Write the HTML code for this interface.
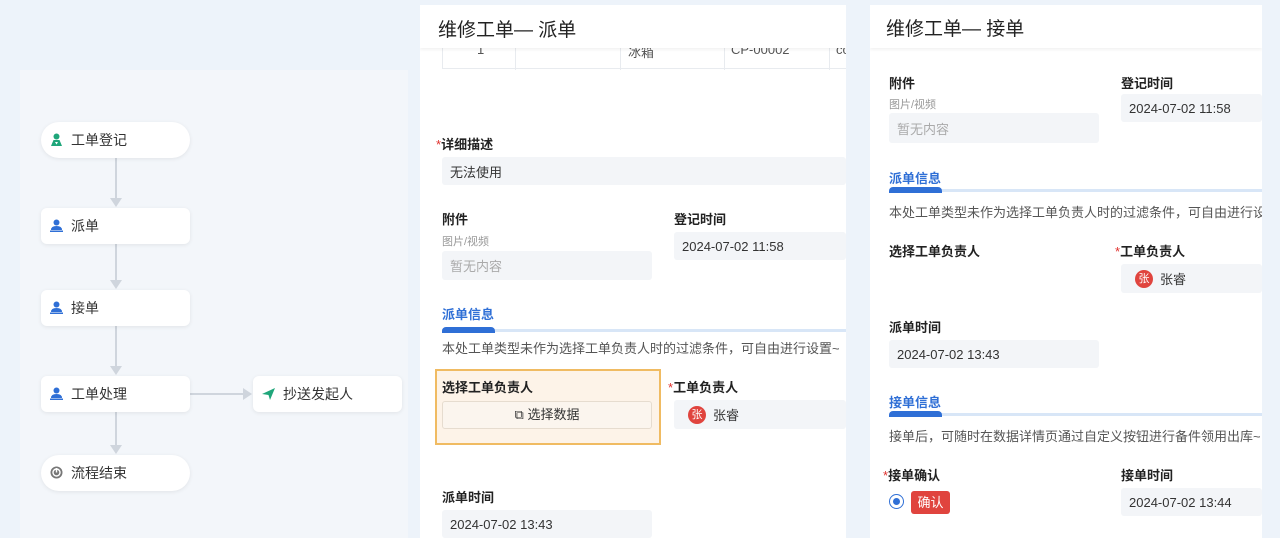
<!DOCTYPE html>
<html><head><meta charset="utf-8"><style>
*{margin:0;padding:0;box-sizing:border-box}
body{width:1280px;height:538px;overflow:hidden;background:#edf3fa;font-family:"Liberation Sans","Noto Sans CJK SC",sans-serif;color:#222;position:relative}
.a{position:absolute;white-space:nowrap}
.node{position:absolute;background:#fff;border-radius:6px;box-shadow:0 1px 4px rgba(0,0,0,.08);height:36px;width:149px;font-size:14px;color:#333;display:flex;align-items:center;padding-left:30px}
.node .ic{position:absolute;left:9px;top:11px}
.pill{border-radius:18px}
.vl{position:absolute;left:115px;width:2px;background:#cfd5dd}
.ah{position:absolute;width:0;height:0;border-left:6px solid transparent;border-right:6px solid transparent;border-top:9px solid #cfd5dd}
.lb{font-size:13px;font-weight:bold;color:#222}
.st{color:#e0302d;font-weight:normal}
.box{position:absolute;background:#f3f5f8;border-radius:3px;font-size:13px;color:#333;display:flex;align-items:center;padding-left:8px}
.sec{font-size:13px;font-weight:bold;color:#2f6fd6}
.bar{position:absolute;height:3px;background:#d8e6f7}
.barb{position:absolute;height:6px;background:#2f6fd6;border-radius:4px 4px 0 0}
.desc{font-size:13px;color:#555}
.gray{font-size:11px;color:#999}
.av{display:inline-block;width:18px;height:18px;border-radius:50%;background:#e0443e;color:#fff;font-size:11px;text-align:center;line-height:18px;margin-right:7px}
</style></head><body>
<div class="a" style="left:20px;top:70px;width:388px;height:468px;background:#f3f6fa"></div>
<div class="vl" style="top:158px;height:42px"></div><div class="ah" style="left:110px;top:198px"></div>
<div class="vl" style="top:244px;height:38px"></div><div class="ah" style="left:110px;top:280px"></div>
<div class="vl" style="top:326px;height:42px"></div><div class="ah" style="left:110px;top:366px"></div>
<div class="vl" style="top:412px;height:35px"></div><div class="ah" style="left:110px;top:445px"></div>
<div class="a" style="left:190px;top:393px;width:55px;height:2px;background:#cfd5dd"></div>
<div class="a" style="left:243px;top:388px;border-top:6px solid transparent;border-bottom:6px solid transparent;border-left:9px solid #cfd5dd"></div>

<div class="node pill" style="left:41px;top:122px"><svg class="ic" width="13" height="13" viewBox="0 0 13 13"><circle cx="6.5" cy="3.5" r="3" fill="#1fa67a"/><path d="M1 13 L3.5 7 H9.5 L12 13Z" fill="#1fa67a"/><path d="M5 9 H8 L6.5 11.5Z" fill="#fff"/></svg>工单登记</div>
<div class="node" style="left:41px;top:208px"><svg class="ic" width="13" height="13" viewBox="0 0 13 13"><circle cx="6.5" cy="3.5" r="3" fill="#2f6fd6"/><path d="M1 11 Q1 7 6.5 7 Q12 7 12 11Z" fill="#2f6fd6"/><rect x="0" y="11.5" width="13" height="1.5" fill="#2f6fd6"/></svg>派单</div>
<div class="node" style="left:41px;top:290px"><svg class="ic" width="13" height="13" viewBox="0 0 13 13"><circle cx="6.5" cy="3.5" r="3" fill="#2f6fd6"/><path d="M1 11 Q1 7 6.5 7 Q12 7 12 11Z" fill="#2f6fd6"/><rect x="0" y="11.5" width="13" height="1.5" fill="#2f6fd6"/></svg>接单</div>
<div class="node" style="left:41px;top:376px"><svg class="ic" width="13" height="13" viewBox="0 0 13 13"><circle cx="6.5" cy="3.5" r="3" fill="#2f6fd6"/><path d="M1 11 Q1 7 6.5 7 Q12 7 12 11Z" fill="#2f6fd6"/><rect x="0" y="11.5" width="13" height="1.5" fill="#2f6fd6"/></svg>工单处理</div>
<div class="node" style="left:253px;top:376px"><svg class="ic" width="13" height="13" viewBox="0 0 13 13"><path d="M0 7 L13 1 L8 13 L6.5 8Z" fill="#1fa67a"/></svg>抄送发起人</div>
<div class="node pill" style="left:41px;top:455px"><svg class="ic" width="13" height="13" viewBox="0 0 13 13"><circle cx="6.5" cy="6.5" r="6" fill="#777"/><circle cx="6.5" cy="6.5" r="3.5" fill="none" stroke="#fff" stroke-width="1.4"/><rect x="5.8" y="2" width="1.4" height="4.5" fill="#fff"/></svg>流程结束</div>

<div class="a" style="left:420px;top:5px;width:426px;height:533px;background:#fff;overflow:hidden">
  <div class="a" style="left:22px;top:20px;width:410px;height:44px;border:1px solid #e8ebef;font-size:13px;color:#555">
    <div class="a" style="left:72px;top:0;width:1px;height:44px;background:#e8ebef"></div>
    <div class="a" style="left:177px;top:0;width:1px;height:44px;background:#e8ebef"></div>
    <div class="a" style="left:281px;top:0;width:1px;height:44px;background:#e8ebef"></div>
    <div class="a" style="left:386px;top:0;width:1px;height:44px;background:#e8ebef"></div>
    <div class="a" style="left:34px;top:16px">1</div><div class="a" style="left:185px;top:16px">冰箱</div><div class="a" style="left:288px;top:16px">CP-00002</div><div class="a" style="left:393px;top:16px">cc</div>
  </div>
  <div class="a" style="left:0;top:0;width:426px;height:43px;background:#fff;box-shadow:0 2px 3px rgba(0,0,0,.05)"></div>
  <div class="a" style="left:18px;top:10px;font-size:19px;color:#222">维修工单— 派单</div>
  <div class="a lb" style="left:16px;top:129px"><span class="st">*</span>详细描述</div>
  <div class="box" style="left:22px;top:152px;width:404px;height:28px">无法使用</div>
  <div class="a lb" style="left:22px;top:204px">附件</div>
  <div class="a gray" style="left:22px;top:228px">图片/视频</div>
  <div class="box" style="left:22px;top:246px;width:210px;height:29px;color:#aaa">暂无内容</div>
  <div class="a lb" style="left:254px;top:204px">登记时间</div>
  <div class="box" style="left:254px;top:227px;width:172px;height:28px">2024-07-02 11:58</div>
  <div class="a sec" style="left:22px;top:299px">派单信息</div>
  <div class="bar" style="left:22px;top:324px;width:404px"></div>
  <div class="barb" style="left:22px;top:322px;width:53px"></div>
  <div class="a desc" style="left:22px;top:333px">本处工单类型未作为选择工单负责人时的过滤条件，可自由进行设置~</div>
  <div class="a" style="left:15px;top:364px;width:226px;height:76px;background:#fdf3e8;border:2px solid #f0bb62"></div>
  <div class="a lb" style="left:22px;top:372px">选择工单负责人</div>
  <div class="a" style="left:22px;top:396px;width:210px;height:28px;border:1px solid #e6dccf;border-radius:3px;background:#fbf5ee;font-size:13px;color:#333;text-align:center;line-height:26px">⧉ 选择数据</div>
  <div class="a lb" style="left:248px;top:372px"><span class="st">*</span>工单负责人</div>
  <div class="box" style="left:254px;top:395px;width:172px;height:29px;padding-left:14px"><span class="av">张</span>张睿</div>
  <div class="a lb" style="left:22px;top:482px">派单时间</div>
  <div class="box" style="left:22px;top:505px;width:210px;height:28px">2024-07-02 13:43</div>
</div>

<div class="a" style="left:870px;top:5px;width:392px;height:533px;background:#fff;overflow:hidden">
  <div class="a" style="left:0;top:0;width:392px;height:43px;background:#fff;box-shadow:0 2px 3px rgba(0,0,0,.05)"></div>
  <div class="a" style="left:16px;top:9px;font-size:19px;color:#222">维修工单— 接单</div>
  <div class="a lb" style="left:19px;top:68px">附件</div>
  <div class="a gray" style="left:19px;top:91px">图片/视频</div>
  <div class="box" style="left:19px;top:108px;width:210px;height:30px;color:#aaa">暂无内容</div>
  <div class="a lb" style="left:251px;top:68px">登记时间</div>
  <div class="box" style="left:251px;top:89px;width:141px;height:28px">2024-07-02 11:58</div>
  <div class="a sec" style="left:19px;top:163px">派单信息</div>
  <div class="bar" style="left:19px;top:184px;width:373px"></div>
  <div class="barb" style="left:19px;top:182px;width:53px"></div>
  <div class="a desc" style="left:19px;top:197px">本处工单类型未作为选择工单负责人时的过滤条件，可自由进行设置~</div>
  <div class="a lb" style="left:19px;top:236px">选择工单负责人</div>
  <div class="a lb" style="left:245px;top:236px"><span class="st">*</span>工单负责人</div>
  <div class="box" style="left:251px;top:259px;width:141px;height:29px;padding-left:14px"><span class="av">张</span>张睿</div>
  <div class="a lb" style="left:19px;top:312px">派单时间</div>
  <div class="box" style="left:19px;top:335px;width:210px;height:28px">2024-07-02 13:43</div>
  <div class="a sec" style="left:19px;top:387px">接单信息</div>
  <div class="bar" style="left:19px;top:408px;width:373px"></div>
  <div class="barb" style="left:19px;top:406px;width:53px"></div>
  <div class="a desc" style="left:19px;top:421px">接单后，可随时在数据详情页通过自定义按钮进行备件领用出库~</div>
  <div class="a lb" style="left:13px;top:460px"><span class="st">*</span>接单确认</div>
  <div class="a" style="left:19px;top:489px;width:15px;height:15px;border-radius:50%;border:1px solid #2f6fd6;background:#fff"><div class="a" style="left:3px;top:3px;width:7px;height:7px;border-radius:50%;background:#2f6fd6"></div></div>
  <div class="a" style="left:41px;top:486px;width:39px;height:23px;background:#e0443e;border-radius:3px;color:#fff;font-size:13px;text-align:center;line-height:23px">确认</div>
  <div class="a lb" style="left:251px;top:460px">接单时间</div>
  <div class="box" style="left:251px;top:483px;width:141px;height:28px">2024-07-02 13:44</div>
</div>
</body></html>
